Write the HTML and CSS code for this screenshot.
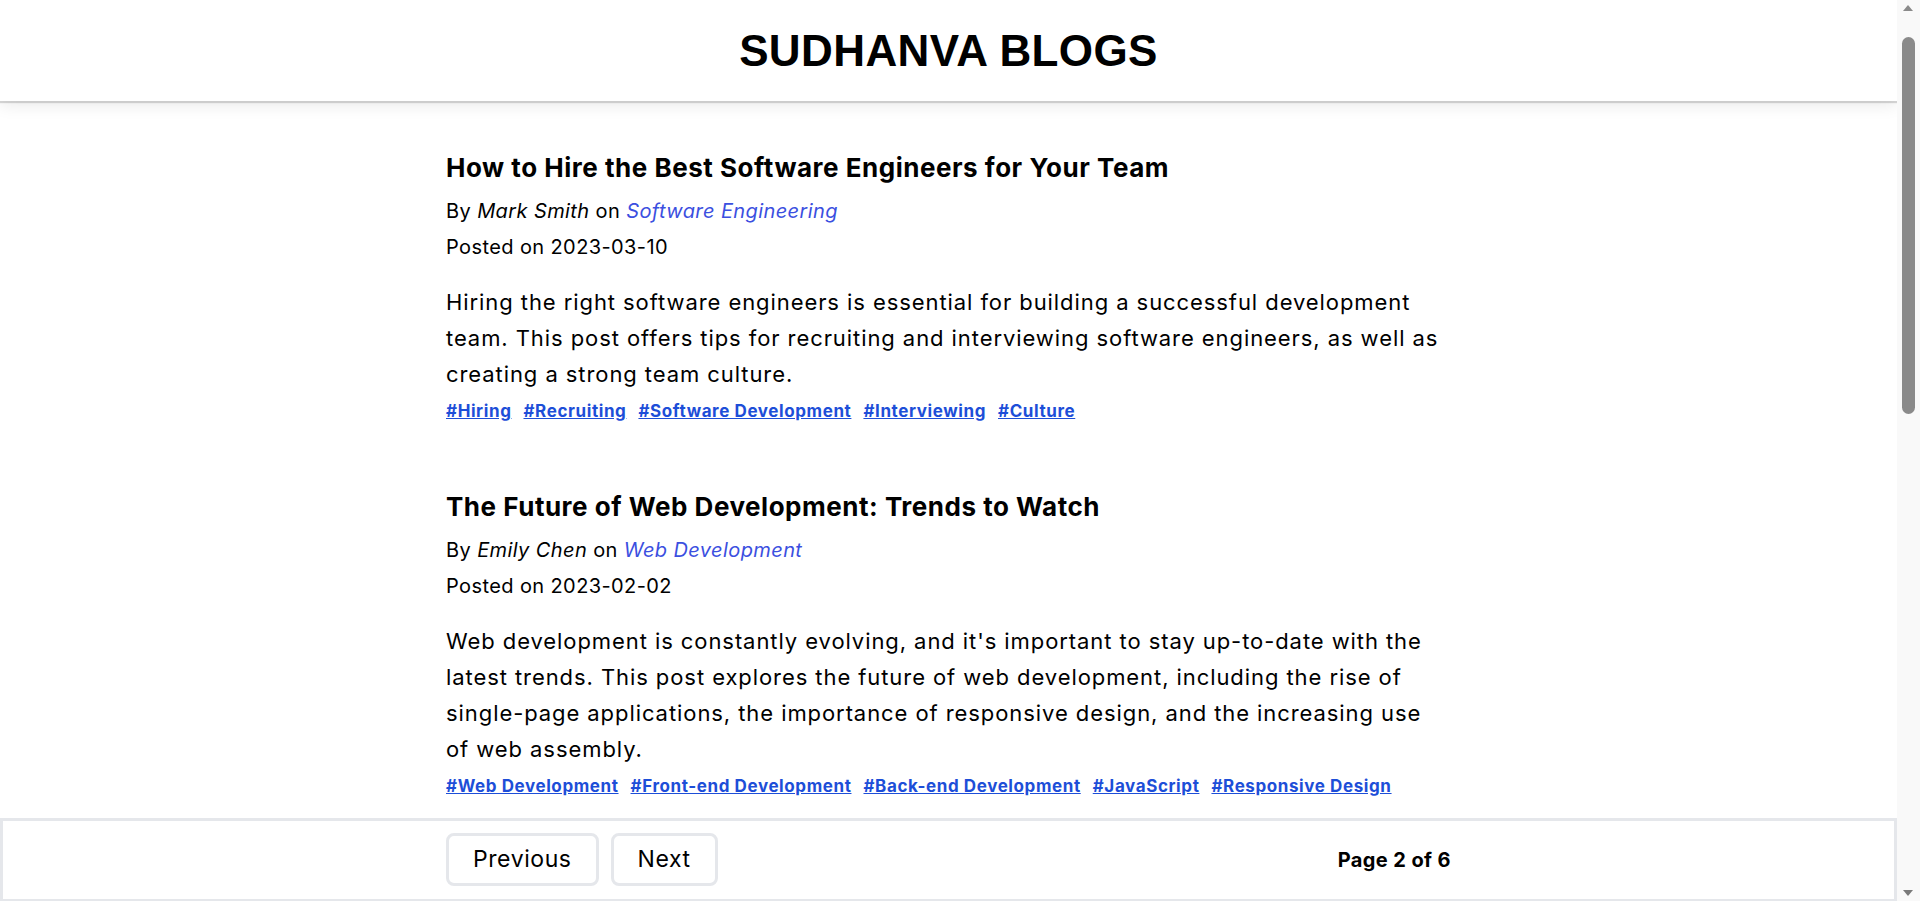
FILE: index.html
```html
<!DOCTYPE html>
<html lang="en">
<head>
<meta charset="utf-8">
<title>Sudhanva Blogs</title>
<link rel="stylesheet" href="styles.css">
</head>
<body>
<header class="site-header">
  <h1 class="site-title">SUDHANVA BLOGS</h1>
</header>

<main class="posts">
  <article class="post">
    <h2 class="post-title">How to Hire the Best Software Engineers for Your Team</h2>
    <p class="post-meta">By <em>Mark Smith</em> on <a class="category" href="#">Software Engineering</a></p>
    <p class="post-meta">Posted on 2023-03-10</p>
    <p class="post-body">Hiring the right software engineers is essential for building a successful development team. This post offers tips for recruiting and interviewing software engineers, as well as creating a strong team culture.</p>
    <div class="tags">
      <a class="tag" href="#">#Hiring</a>
      <a class="tag" href="#">#Recruiting</a>
      <a class="tag" href="#">#Software Development</a>
      <a class="tag" href="#">#Interviewing</a>
      <a class="tag" href="#">#Culture</a>
    </div>
  </article>

  <article class="post">
    <h2 class="post-title">The Future of Web Development: Trends to Watch</h2>
    <p class="post-meta">By <em>Emily Chen</em> on <a class="category" href="#">Web Development</a></p>
    <p class="post-meta">Posted on 2023-02-02</p>
    <p class="post-body">Web development is constantly evolving, and it's important to stay up-to-date with the latest trends. This post explores the future of web development, including the rise of single-page applications, the importance of responsive design, and the increasing use of web assembly.</p>
    <div class="tags">
      <a class="tag" href="#">#Web Development</a>
      <a class="tag" href="#">#Front-end Development</a>
      <a class="tag" href="#">#Back-end Development</a>
      <a class="tag" href="#">#JavaScript</a>
      <a class="tag" href="#">#Responsive Design</a>
    </div>
  </article>

  <article class="post">
    <h2 class="post-title">Getting Started with Machine Learning in Python</h2>
    <p class="post-meta">By <em>David Lee</em> on <a class="category" href="#">Data Science</a></p>
    <p class="post-meta">Posted on 2023-01-18</p>
    <p class="post-body">Machine learning is one of the most exciting fields in software today. This post walks through the basics of setting up a Python environment, choosing the right libraries, and training your first model, with practical tips for evaluating results.</p>
    <div class="tags">
      <a class="tag" href="#">#Machine Learning</a>
      <a class="tag" href="#">#Python</a>
      <a class="tag" href="#">#Data Science</a>
      <a class="tag" href="#">#AI</a>
    </div>
  </article>

  <article class="post">
    <h2 class="post-title">Writing Clean Code: Principles Every Developer Should Know</h2>
    <p class="post-meta">By <em>Sarah Johnson</em> on <a class="category" href="#">Best Practices</a></p>
    <p class="post-meta">Posted on 2022-12-05</p>
    <p class="post-body">Clean code is easier to read, test and maintain. This post covers the core principles of writing clean code, including meaningful naming, small focused functions, consistent formatting, and the importance of code reviews in keeping a codebase healthy.</p>
    <div class="tags">
      <a class="tag" href="#">#Clean Code</a>
      <a class="tag" href="#">#Refactoring</a>
      <a class="tag" href="#">#Code Review</a>
      <a class="tag" href="#">#Best Practices</a>
    </div>
  </article>

  <article class="post">
    <h2 class="post-title">An Introduction to Cloud Computing for Beginners</h2>
    <p class="post-meta">By <em>Raj Patel</em> on <a class="category" href="#">Cloud Computing</a></p>
    <p class="post-meta">Posted on 2022-11-21</p>
    <p class="post-body">Cloud computing has changed the way applications are built and deployed. This post explains the key concepts behind cloud services, the differences between IaaS, PaaS and SaaS, and how to choose the right provider for your project.</p>
    <div class="tags">
      <a class="tag" href="#">#Cloud</a>
      <a class="tag" href="#">#DevOps</a>
      <a class="tag" href="#">#AWS</a>
      <a class="tag" href="#">#Infrastructure</a>
    </div>
  </article>
</main>

<footer class="pager">
  <div class="pager-inner">
    <div class="pager-buttons">
      <button class="pager-btn" type="button">Previous</button>
      <button class="pager-btn" type="button">Next</button>
    </div>
    <span class="pager-status">Page 2 of 6</span>
  </div>
</footer>

<div class="scrollbar" aria-hidden="true">
  <span class="scroll-arrow scroll-up"></span>
  <span class="scroll-thumb"></span>
  <span class="scroll-arrow scroll-down"></span>
</div>
</body>
</html>
```

FILE: styles.css
```css
* {
  box-sizing: border-box;
}

html, body {
  margin: 0;
  padding: 0;
}

body {
  margin-right: 23px;
  font-family: Inter, "Noto Sans", "Liberation Sans", sans-serif;
  letter-spacing: 0.025em;
  color: #000;
  background: #fff;
}

.site-header {
  background: #fff;
  padding: 24px;
  box-shadow: 0 2px 1px rgba(0, 0, 0, 0.15), 0 4px 16px rgba(0, 0, 0, 0.09);
  position: relative;
  z-index: 1;
}

.site-title {
  margin: 0;
  text-align: center;
  font-family: "Liberation Sans", Arial, sans-serif;
  font-weight: 700;
  font-size: 44px;
  line-height: 53px;
}

.posts {
  max-width: 1005px;
  margin: 0 auto;
  padding: 49px 0 120px;
  display: flex;
  flex-direction: column;
  gap: 66px;
}

.post-title {
  margin: 0 0 7px;
  font-size: 26px;
  line-height: 36px;
  font-weight: 700;
  letter-spacing: 0.02em;
}

.post-meta {
  margin: 0;
  font-size: 20px;
  line-height: 36px;
}

.post-meta em {
  font-style: italic;
}

.category {
  color: #3b4fe0;
  font-style: italic;
  text-decoration: none;
}

.post-body {
  margin: 19px 0 0;
  font-size: 22px;
  line-height: 36px;
  letter-spacing: 0.042em;
}

.tags {
  margin-top: 7px;
  display: flex;
  flex-wrap: wrap;
  gap: 12px;
  font-size: 17px;
  line-height: 24px;
  letter-spacing: 0.035em;
}

.tag {
  color: #1d4ed8;
  font-weight: 700;
  text-decoration: underline;
}

.pager {
  position: fixed;
  left: 0;
  right: 23px;
  bottom: 0;
  background: #fff;
  border: 3px solid #e5e7eb;
  border-bottom-width: 2px;
  padding: 12px 0 13px;
  z-index: 2;
}

.pager-inner {
  max-width: 1005px;
  margin: 0 auto;
  display: flex;
  align-items: center;
  justify-content: space-between;
}

.pager-buttons {
  display: flex;
  gap: 12px;
}

.pager-btn {
  font-family: Inter, "Noto Sans", sans-serif;
  font-size: 23px;
  letter-spacing: 0.025em;
  line-height: 35px;
  padding: 6px 24px;
  background: #fff;
  color: #000;
  border: 3px solid #e5e7eb;
  border-radius: 8px;
  cursor: pointer;
}

.pager-status {
  font-size: 20px;
  font-weight: 700;
}

.scrollbar {
  position: fixed;
  top: 0;
  right: 0;
  bottom: 0;
  width: 23px;
  background: #f9f9f9;
  z-index: 3;
}

.scroll-thumb {
  position: absolute;
  top: 37px;
  left: 5px;
  width: 13px;
  height: 377px;
  border-radius: 7px;
  background: #8a8a8a;
}

.scroll-arrow {
  position: absolute;
  left: 6px;
  width: 0;
  height: 0;
  border-left: 5.5px solid transparent;
  border-right: 5.5px solid transparent;
}

.scroll-up {
  top: 5px;
  border-bottom: 6px solid #8a8a8a;
}

.scroll-down {
  bottom: 5px;
  border-top: 6px solid #7a7a7a;
}
```
